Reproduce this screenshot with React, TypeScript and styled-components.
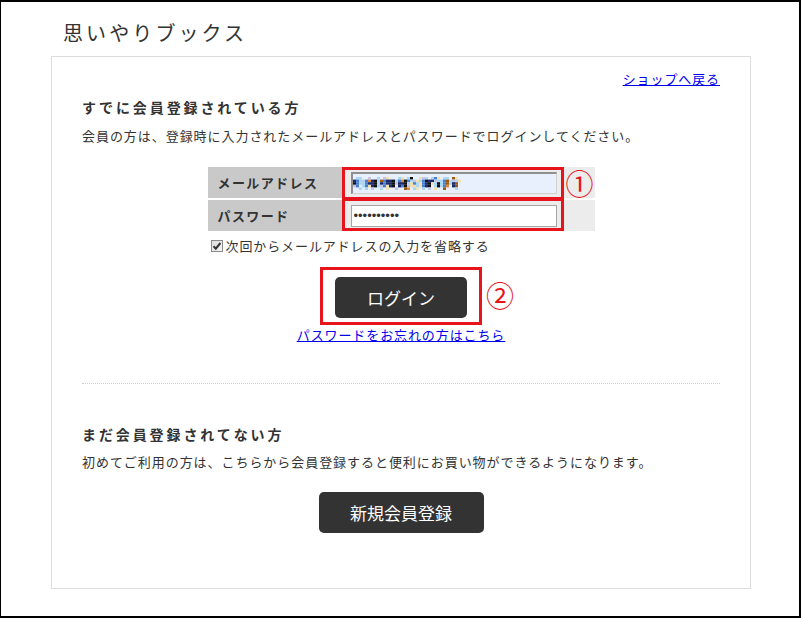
import React from 'react';
import styled, { createGlobalStyle } from 'styled-components';

const GlobalStyle = createGlobalStyle`
  html, body { margin: 0; padding: 0; background: #fff; }
  body { font-family: "Noto Sans CJK JP", "Noto Sans", sans-serif; color: #333; }
  * { box-sizing: border-box; }
`;

const Frame = styled.div`
  width: 801px;
  height: 618px;
  border-style: solid;
  border-color: #000;
  border-width: 2px 2px 2px 1px;
  padding: 19px 0 0 50px;
  background: #fff;
`;

const SiteTitle = styled.h1`
  margin: 0;
  padding-left: 12px;
  font-size: 20px;
  line-height: 24px;
  font-weight: 400;
  letter-spacing: 3.1px;
  color: #333;
`;

const Panel = styled.main`
  margin-top: 11px;
  width: 700px;
  height: 533px;
  border: 1px solid #ddd;
  padding: 13px 30px 0;
`;

const TopBar = styled.div`
  text-align: right;
  font-size: 13px;
  line-height: 18px;
`;

const TextLink = styled.a`
  color: #0000ee;
  text-decoration: underline;
  font-size: 13px;
  letter-spacing: 0.9px;
  cursor: pointer;
`;

const SectionHeading = styled.h2<{ $mt: number }>`
  margin: ${(p) => p.$mt}px 0 0;
  font-size: 14px;
  line-height: 20px;
  font-weight: 700;
  letter-spacing: 2.9px;
  color: #333;
`;

const Lead = styled.p<{ $mt: number }>`
  margin: ${(p) => p.$mt}px 0 0;
  font-size: 13px;
  line-height: 20px;
  letter-spacing: 0.95px;
  color: #333;
`;

const LoginGrid = styled.div`
  display: grid;
  grid-template-columns: 134px 251px;
  grid-auto-rows: 31px;
  gap: 2px;
  width: 387px;
  margin: 21px auto 0;
`;

const FieldLabel = styled.div`
  background: #c9c9c9;
  display: flex;
  align-items: center;
  padding-left: 10px;
  font-size: 13px;
  font-weight: 700;
  letter-spacing: 1.4px;
  color: #333;
`;

const FieldCell = styled.div`
  position: relative;
  background: #ececec;
  display: flex;
  align-items: center;
  padding-left: 7px;
`;

const EmailBox = styled.div`
  width: 206px;
  height: 22px;
  background: #e8f0fe;
  border-style: solid;
  border-width: 2px 1px 1px 2px;
  border-color: #8f8f8f #d0d0d0 #d0d0d0 #8f8f8f;
  display: flex;
  align-items: center;
  padding-left: 0;
`;

const PasswordInput = styled.input`
  width: 206px;
  height: 22px;
  border: 1px solid #a5a5a5;
  background: #fff;
  padding: 0 2px;
  font-family: "Liberation Sans", sans-serif;
  font-size: 13px;
  color: #333;
  outline: none;
`;

const Highlight = styled.div<{ $top: number; $left: number; $w: number; $h: number }>`
  position: absolute;
  top: ${(p) => p.$top}px;
  left: ${(p) => p.$left}px;
  width: ${(p) => p.$w}px;
  height: ${(p) => p.$h}px;
  border: 3px solid #e8141c;
  pointer-events: none;
`;

const CircleMark = styled.span<{ $top: number; $left: number }>`
  position: absolute;
  top: ${(p) => p.$top}px;
  left: ${(p) => p.$left}px;
  font-size: 28px;
  line-height: 28px;
  color: #e8141c;
  pointer-events: none;
`;

const CheckRow = styled.label`
  display: flex;
  align-items: center;
  gap: 3px;
  width: 387px;
  margin: 5px auto 0;
  padding-left: 3px;
  font-size: 13px;
  line-height: 20px;
  letter-spacing: 0.9px;
  color: #333;
`;

const ButtonWrap = styled.div<{ $mt: number }>`
  position: relative;
  width: fit-content;
  margin: ${(p) => p.$mt}px auto 0;
`;

const DarkButton = styled.button<{ $w: number }>`
  display: block;
  width: ${(p) => p.$w}px;
  height: 41px;
  background: #333;
  color: #fff;
  border: none;
  border-radius: 5px;
  font-family: inherit;
  font-size: 17px;
  padding: 0;
  cursor: pointer;
`;

const CenterLine = styled.div`
  text-align: center;
  margin-top: 8px;
  font-size: 13px;
  line-height: 18px;
`;

const Divider = styled.hr`
  margin: 39px 0 0;
  border: 0;
  border-top: 1px dotted #cfcfcf;
  height: 0;
`;

const mosaicRows = [
  '.cc..g..c.gd...cd.cf..dgc.cbd.cc.ed.',
  'abcgbhafcebaafcbhfbcgdcbfaagccbecgcd',
  'fbccbaafcabaafgaafcdbcdbafdcfcbecae.',
  'gb.cbdafcgbdaf.abfgddcdbaf.cfcbh.ae.',
  '..c.c.g..c.d..g..eh.cd.c.g.d..e...c.',
];
const palette: Record<string, string> = {
  a: '#1b2a6b',
  b: '#4a7fd0',
  c: '#a9d6f2',
  d: '#f1dfae',
  e: '#9c5a10',
  f: '#111111',
  g: '#c4c6e6',
  h: '#e0883a',
};

const Mosaic = () => (
  <svg width="108" height="13" viewBox="0 0 108 15" preserveAspectRatio="none" aria-hidden="true">
    {mosaicRows.map((row, r) =>
      row.split('').map((ch, c) =>
        palette[ch] ? (
          <rect key={`${r}-${c}`} x={c * 3} y={r * 3} width="3" height="3" fill={palette[ch]} />
        ) : null
      )
    )}
  </svg>
);

const CheckIcon = () => (
  <svg width="12" height="12" viewBox="0 0 12 12" aria-hidden="true">
    <defs>
      <linearGradient id="cbg" x1="0" y1="0" x2="1" y2="1">
        <stop offset="0" stopColor="#dcdcdc" />
        <stop offset="1" stopColor="#f6f6f6" />
      </linearGradient>
    </defs>
    <rect x="0.5" y="0.5" width="11" height="11" fill="url(#cbg)" stroke="#8a8a8a" />
    <path d="M2.6 6.2 L4.8 8.6 L9.4 3" fill="none" stroke="#333" strokeWidth="2" />
  </svg>
);

export default function App() {
  return (
    <>
      <GlobalStyle />
      <Frame>
        <SiteTitle>思いやりブックス</SiteTitle>
        <Panel>
          <TopBar>
            <TextLink>ショップへ戻る</TextLink>
          </TopBar>
          <SectionHeading $mt={9}>すでに会員登録されている方</SectionHeading>
          <Lead $mt={9}>会員の方は、登録時に入力されたメールアドレスとパスワードでログインしてください。</Lead>
          <LoginGrid>
            <FieldLabel>メールアドレス</FieldLabel>
            <FieldCell>
              <EmailBox>
                <Mosaic />
              </EmailBox>
              <Highlight $top={0} $left={-2} $w={222} $h={33} />
              <CircleMark $top={2} $left={222}>①</CircleMark>
            </FieldCell>
            <FieldLabel>パスワード</FieldLabel>
            <FieldCell>
              <PasswordInput type="password" value="abcdefghij" readOnly />
              <Highlight $top={-2} $left={-2} $w={222} $h={33} />
            </FieldCell>
          </LoginGrid>
          <CheckRow>
            <CheckIcon />
            <span>次回からメールアドレスの入力を省略する</span>
          </CheckRow>
          <ButtonWrap $mt={21}>
            <DarkButton $w={132}>ログイン</DarkButton>
            <Highlight $top={-10} $left={-15} $w={162} $h={58} />
            <CircleMark $top={4} $left={151}>②</CircleMark>
          </ButtonWrap>
          <CenterLine>
            <TextLink>パスワードをお忘れの方はこちら</TextLink>
          </CenterLine>
          <Divider />
          <SectionHeading $mt={40}>まだ会員登録されてない方</SectionHeading>
          <Lead $mt={8}>初めてご利用の方は、こちらから会員登録すると便利にお買い物ができるようになります。</Lead>
          <ButtonWrap $mt={20}>
            <DarkButton $w={165}>新規会員登録</DarkButton>
          </ButtonWrap>
        </Panel>
      </Frame>
    </>
  );
}
